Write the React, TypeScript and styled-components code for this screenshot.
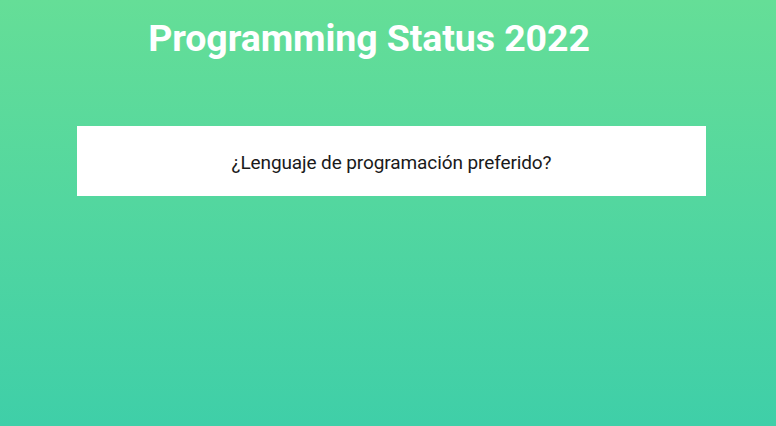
import React from "react";
import styled, { createGlobalStyle } from "styled-components";

const Global = createGlobalStyle`
  html, body { margin: 0; padding: 0; height: 100%; }
  body {
    font-family: Roboto, "Liberation Sans", sans-serif;
    background: linear-gradient(to bottom, #65de97 0%, #3fcfa8 100%);
    min-height: 426px;
  }
`;

const Page = styled.main`
  width: 776px;
  height: 426px;
  display: flex;
  flex-direction: column;
  align-items: center;
`;

const Title = styled.h1`
  margin: 12px 38px 0 0;
  font-family: Roboto, "Liberation Sans", sans-serif;
  font-weight: 700;
  font-size: 37.5px;
  letter-spacing: -0.1px;
  line-height: 52px;
  color: #ffffff;
`;

const Card = styled.section`
  margin-top: 62px;
  width: 629px;
  height: 70px;
  margin-left: 7px;
  background: #ffffff;
  display: flex;
  align-items: center;
  justify-content: center;
`;

const Question = styled.p`
  margin: 2px 0 0 0;
  font-size: 19px;
  letter-spacing: -0.1px;
  color: #1a1a1a;
`;

export default function App() {
  return (
    <>
      <Global />
      <Page>
        <Title>Programming Status 2022</Title>
        <Card>
          <Question>¿Lenguaje de programación preferido?</Question>
        </Card>
      </Page>
    </>
  );
}
